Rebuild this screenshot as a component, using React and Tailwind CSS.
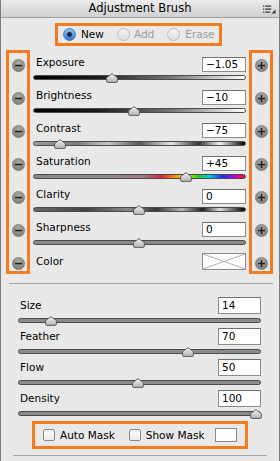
import React from "react";

const Thumb = ({ left }) => (
  <svg
    width="12"
    height="10"
    viewBox="0 0 12 10"
    className="absolute top-[1px] -translate-x-1/2"
    style={{ left }}
  >
    <defs>
      <linearGradient id="thumbg" x1="0" y1="0" x2="0" y2="1">
        <stop offset="0" stopColor="#f4f4f4" />
        <stop offset="1" stopColor="#b2b2b2" />
      </linearGradient>
    </defs>
    <path
      d="M6 0.6 L11.4 4.6 L11.4 8.2 Q11.4 9.4 10.2 9.4 L1.8 9.4 Q0.6 9.4 0.6 8.2 L0.6 4.6 Z"
      fill="url(#thumbg)"
      stroke="#555"
      strokeWidth="0.9"
    />
  </svg>
);

const Track = ({ cls, thumb }) => (
  <div className="relative h-[10px] flex items-center">
    <div className={"w-full h-[5px] rounded-full border border-[#4a4a4a] " + cls} />
    <Thumb left={thumb} />
  </div>
);

const RoundBtn = ({ plus }) => (
  <svg width="13" height="13" viewBox="0 0 13 13" className="block">
    <defs>
      <radialGradient id="btng" cx="0.5" cy="0.35" r="0.7">
        <stop offset="0" stopColor="#ababab" />
        <stop offset="1" stopColor="#767676" />
      </radialGradient>
    </defs>
    <circle cx="6.5" cy="6.5" r="6.2" fill="url(#btng)" stroke="#7a7a7a" strokeWidth="0.5" />
    <rect x="3" y="5.8" width="7" height="1.5" fill="#1e1e1e" />
    {plus && <rect x="5.8" y="3" width="1.5" height="7" fill="#1e1e1e" />}
  </svg>
);

const Input = ({ value, w = "w-[44px]", h = "h-[15px]", extra = "" }) => (
  <div
    className={
      w +
      " " +
      h +
      " bg-white border border-[#8c8c8c] border-t-[#6e6e6e] flex items-center pl-[3px] leading-none text-[10.5px] " +
      extra
    }
  >
    {value}
  </div>
);

const Radio = ({ checked }) =>
  checked ? (
    <svg width="13" height="13" viewBox="0 0 13 13" className="block shrink-0">
      <defs>
        <linearGradient id="radg" x1="0" y1="0" x2="0" y2="1">
          <stop offset="0" stopColor="#8cc3f5" />
          <stop offset="1" stopColor="#2f73d2" />
        </linearGradient>
      </defs>
      <circle cx="6.5" cy="6.5" r="6" fill="url(#radg)" stroke="#3d6aa8" strokeWidth="0.8" />
      <circle cx="6.5" cy="6.5" r="2.4" fill="#142238" />
    </svg>
  ) : (
    <svg width="13" height="13" viewBox="0 0 13 13" className="block shrink-0">
      <defs>
        <linearGradient id="radu" x1="0" y1="0" x2="0" y2="1">
          <stop offset="0" stopColor="#f2f2f2" />
          <stop offset="1" stopColor="#e0e0e0" />
        </linearGradient>
      </defs>
      <circle cx="6.5" cy="6.5" r="6" fill="url(#radu)" stroke="#b4b4b4" strokeWidth="0.8" />
    </svg>
  );

const Checkbox = () => (
  <div className="w-[12px] h-[12px] rounded-[2px] border border-[#8a8a8a] bg-gradient-to-b from-white to-[#ececec] shrink-0" />
);

const topRows = [
  {
    label: "Exposure",
    value: "\u22121.05",
    thumb: 79,
    cls: "bg-[linear-gradient(to_right,#000,#1a1a1a_30%,#777_65%,#fff)]",
  },
  {
    label: "Brightness",
    value: "\u221210",
    thumb: 101,
    cls: "bg-[linear-gradient(to_right,#000,#1a1a1a_30%,#777_65%,#fff)]",
  },
  {
    label: "Contrast",
    value: "\u221275",
    thumb: 27,
    cls: "bg-[linear-gradient(to_right,#a0a0a0,#7a7a7a_20%,#c8c8c8_35%,#5a5a5a_50%,#e6e6e6_65%,#333_78%,#f4f4f4_88%,#000)]",
  },
  {
    label: "Saturation",
    value: "+45",
    thumb: 153,
    cls: "bg-[linear-gradient(to_right,#8a8a8a,#8f8a90_35%,#a07a86_52%,#e02040_60%,#ff9000_67%,#e8f000_72%,#20d020_78%,#00d0e0_83%,#1030ff_89%,#c000e0_95%,#ff0020)]",
  },
  {
    label: "Clarity",
    value: "0",
    thumb: 106,
    cls: "bg-[linear-gradient(to_right,#6a6a6a,#444_25%,#8a8a8a_45%,#3a3a3a_58%,#b4b4b4_70%,#222_80%,#e0e0e0_88%,#000)]",
  },
  {
    label: "Sharpness",
    value: "0",
    thumb: 106,
    cls: "bg-[#8a8a8a]",
  },
];

const lowerRows = [
  { label: "Size", value: "14", thumb: 33 },
  { label: "Feather", value: "70", thumb: 170 },
  { label: "Flow", value: "50", thumb: 120 },
  { label: "Density", value: "100", thumb: 238 },
];

export default function App() {
  return (
    <div className="w-[280px] h-[461px] bg-[#e9e9e9] border-l border-r border-[#7d7d7d] font-['DejaVu_Sans',sans-serif] text-[10.5px] text-black flex flex-col overflow-hidden">
      {/* Title bar */}
      <div className="h-[18px] shrink-0 relative flex items-center justify-center bg-gradient-to-b from-[#ededed] to-[#d0d0d0] border-b border-[#9c9c9c]">
        <span className="text-[11.5px] leading-none">Adjustment Brush</span>
        <svg
          width="13"
          height="9"
          viewBox="0 0 13 9"
          className="absolute right-[3px] top-[5px]"
        >
          <rect x="0" y="0.5" width="1.2" height="1.2" fill="#333" />
          <rect x="0" y="3.5" width="1.2" height="1.2" fill="#333" />
          <rect x="0" y="6.5" width="1.2" height="1.2" fill="#333" />
          <rect x="2.2" y="0.5" width="6" height="1.2" fill="#333" />
          <rect x="2.2" y="3.5" width="6" height="1.2" fill="#333" />
          <rect x="2.2" y="6.5" width="5" height="1.2" fill="#333" />
          <path d="M12.5 4.5 L12.5 8.5 L8.5 8.5 Z" fill="#333" />
        </svg>
      </div>

      {/* Mode radios */}
      <div className="mt-[5px] ml-[54px] w-[167px] h-[23px] border-[3px] border-[#f47b20] flex items-center pl-[5px] gap-[13px]">
        <div className="flex items-center gap-[5px]">
          <Radio checked />
          <span className="leading-none">New</span>
        </div>
        <div className="flex items-center gap-[4px]">
          <Radio />
          <span className="leading-none text-[#9c9c9c]">Add</span>
        </div>
        <div className="flex items-center gap-[5px]">
          <Radio />
          <span className="leading-none text-[#9c9c9c]">Erase</span>
        </div>
      </div>

      {/* Local adjustments */}
      <div className="mt-[4px] flex items-start">
        <div className="ml-[5px] w-[24px] h-[224px] border-[3px] border-[#f47b20] flex flex-col items-center pt-[6px] gap-[20px]">
          {Array.from({ length: 7 }).map((_, i) => (
            <RoundBtn key={i} />
          ))}
        </div>

        <div className="ml-[3px] w-[213px] pt-[5px] flex flex-col">
          {topRows.map((r) => (
            <div key={r.label} className="h-[33px] flex flex-col">
              <div className="h-[17px] flex items-start justify-between">
                <span className="leading-[15px] pl-[3px]">{r.label}</span>
                <Input value={r.value} extra="mt-[2px]" />
              </div>
              <Track cls={r.cls} thumb={r.thumb} />
            </div>
          ))}
          <div className="h-[17px] flex items-center justify-between">
            <span className="leading-[15px] pl-[3px]">Color</span>
            <div className="w-[44px] h-[17px] bg-white border border-[#8c8c8c]">
              <svg width="42" height="15" viewBox="0 0 42 15" className="block">
                <line x1="0" y1="0" x2="42" y2="15" stroke="#9a9a9a" strokeWidth="0.8" />
                <line x1="42" y1="0" x2="0" y2="15" stroke="#9a9a9a" strokeWidth="0.8" />
              </svg>
            </div>
          </div>
        </div>

        <div className="ml-[3px] w-[24px] h-[224px] border-[3px] border-[#f47b20] flex flex-col items-center pt-[6px] gap-[20px]">
          {Array.from({ length: 7 }).map((_, i) => (
            <RoundBtn key={i} plus />
          ))}
        </div>
      </div>

      <div className="mt-[9px] ml-[8px] mr-[6px] h-px bg-[#a4a4a4] shrink-0" />

      {/* Brush settings */}
      <div className="mt-[12px] ml-[17px] w-[243px] flex flex-col">
        {lowerRows.map((r) => (
          <div key={r.label} className="h-[31px] flex flex-col">
            <div className="h-[19px] flex items-center justify-between">
              <span className="leading-[15px] pl-[2px]">{r.label}</span>
              <Input value={r.value} w="w-[43px]" h="h-[17px]" />
            </div>
            <Track cls="bg-[#8c8c8c]" thumb={r.thumb} />
          </div>
        ))}
      </div>

      {/* Mask options */}
      <div className="mt-[1px] ml-[31px] w-[216px] h-[28px] border-[3px] border-[#f47b20] flex items-center pl-[8px] shrink-0">
        <Checkbox />
        <span className="ml-[5px] leading-none">Auto Mask</span>
        <div className="ml-[14px]">
          <Checkbox />
        </div>
        <span className="ml-[5px] leading-none">Show Mask</span>
        <div className="ml-[11px] w-[22px] h-[14px] bg-white border border-[#8c8c8c]" />
      </div>

      <div className="mt-[6px] ml-[12px] mr-[12px] h-px bg-[#a4a4a4] shrink-0" />
    </div>
  );
}
